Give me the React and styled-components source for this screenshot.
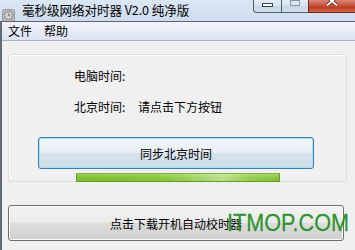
import React from "react";
import styled, { createGlobalStyle } from "styled-components";

const Global = createGlobalStyle`
  html, body { margin: 0; padding: 0; background: #f0f0f0; }
  * { box-sizing: border-box; }
`;

const cjk = `"Noto Sans CJK SC", "Noto Sans", sans-serif`;

const Window = styled.div`
  position: relative;
  width: 355px;
  height: 250px;
  overflow: hidden;
  display: flex;
  flex-direction: column;
  font-family: ${cjk};
  color: #000;
`;

const TitleBar = styled.div`
  height: 21px;
  flex: none;
  display: flex;
  align-items: flex-start;
  background: linear-gradient(#dce7f4, #cddcee);
`;

const AppIcon = styled.div`
  width: 13px;
  height: 13px;
  margin: 3px 0 0 2px;
  flex: none;
`;

const Title = styled.div`
  margin: 1px 0 0 7px;
  font-size: 12.6px;
  line-height: 18px;
  white-space: nowrap;
  letter-spacing: -0.1px;
`;

const Caption = styled.div`
  margin-left: auto;
  display: flex;
  height: 13px;
`;

const CapBtn = styled.div`
  width: ${(p) => p.$w}px;
  height: 13px;
  display: flex;
  justify-content: center;
  align-items: flex-start;
  border: 1px solid ${(p) => (p.$close ? "#6b2a20" : "#4d5d70")};
  border-top: none;
  border-right: ${(p) => (p.$close ? "none" : "0")};
  border-radius: ${(p) => (p.$first ? "0 0 0 4px" : "0")};
  background: ${(p) =>
    p.$close
      ? "linear-gradient(#d9897a 0%, #c9533d 45%, #c13b24 60%, #d2664d 100%)"
      : "linear-gradient(#e4ecf5 0%, #d6e2ee 50%, #c7d6e6 51%, #d2dfec 100%)"};
`;

const MinGlyph = styled.div`
  width: 11px;
  height: 4px;
  margin-top: 3px;
  background: #fff;
  border: 1px solid #3a4454;
`;

const MaxGlyph = styled.div`
  width: 10px;
  height: 7px;
  margin-top: -1px;
  border: 1px solid #8b97a6;
  border-top-width: 2px;
  background: transparent;
`;

const Frame = styled.div`
  flex: 1;
  display: flex;
  flex-direction: column;
  border-left: 2px solid #646b74;
  border-top: 1px solid #5e656e;
  background: #f0f0f0;
`;

const MenuBar = styled.div`
  height: 19px;
  flex: none;
  display: flex;
  align-items: center;
  padding-left: 6px;
  gap: 12px;
  background: linear-gradient(#f1f4fb, #dbe2f2);
  border-bottom: 1px solid #a6aec6;
`;

const MenuItem = styled.span`
  font-size: 12px;
  line-height: 16px;
  padding-bottom: 1px;
`;

const Client = styled.div`
  flex: 1;
  display: flex;
  flex-direction: column;
  padding: 13px 0 0 6px;
`;

const GroupBox = styled.div`
  width: 339px;
  height: 128px;
  flex: none;
  display: flex;
  flex-direction: column;
  align-items: flex-start;
  border: 1px solid #d5dfe5;
  border-radius: 3px;
  box-shadow: inset 1px 1px 0 #fff;
  padding-top: 13px;
`;

const Row = styled.div`
  display: flex;
  margin-left: 65px;
  margin-bottom: ${(p) => p.$mb || 0}px;
  font-size: 12px;
  line-height: 16px;
  white-space: nowrap;
`;

const Label = styled.span`
  width: 64px;
`;

const SyncButton = styled.div`
  width: 276px;
  height: 33px;
  margin-left: 29px;
  display: flex;
  align-items: center;
  justify-content: center;
  font-size: 12px;
  border: 1px solid #3c7fb1;
  border-radius: 3px;
  box-shadow: inset 0 0 0 1px #a6e2f8;
  background: linear-gradient(
    #f1f5f8 0%,
    #e9f0f5 48%,
    #d6e3ec 50%,
    #cfdee8 100%
  );
`;

const Progress = styled.div`
  width: 204px;
  height: 9px;
  margin: 4px 0 -1px 67px;
  border: 1px solid #5f9e22;
  border-top-color: #7db43a;
  border-radius: 1px;
  background: linear-gradient(
      rgba(255, 255, 255, 0.25),
      rgba(255, 255, 255, 0) 60%
    ),
    linear-gradient(
      90deg,
      #7fbd2e 0%,
      #86c336 40%,
      #a3d465 60%,
      #b9e08c 72%,
      #98cd53 85%,
      #84c234 100%
    );
`;

const DownloadButton = styled.div`
  width: 336px;
  height: 36px;
  margin: 23px 0 0 0;
  display: flex;
  align-items: center;
  justify-content: center;
  font-size: 12px;
  border: 1px solid #707070;
  border-radius: 3px;
  box-shadow: inset 0 0 0 1px #fbfbfb;
  background: linear-gradient(
    #f2f2f2 0%,
    #ebebeb 48%,
    #dddddd 50%,
    #cfcfcf 100%
  );
`;

const Watermark = styled.div`
  position: absolute;
  left: 227px;
  top: 209px;
  font-family: "Liberation Sans", Arial, sans-serif;
  font-size: 24px;
  line-height: 28px;
  color: rgba(28, 140, 28, 0.92);
  transform: scaleX(0.9);
  transform-origin: left center;
  -webkit-text-stroke: 0.3px rgba(28, 140, 28, 0.92);
  white-space: nowrap;
  pointer-events: none;
`;

function ClockIcon() {
  return (
    <svg width="13" height="13" viewBox="0 0 13 13">
      <rect x="0.5" y="0.5" width="12" height="12" rx="2" fill="#b8b8b8" stroke="#9a9a9a" />
      <circle cx="6.5" cy="6.5" r="4" fill="#d4d4d4" stroke="#8a8a8a" />
      <path d="M6.5 4.2V6.7H8.3" fill="none" stroke="#7a7a7a" strokeWidth="1" />
    </svg>
  );
}

function CloseGlyph() {
  return (
    <svg width="12" height="7" viewBox="0 0 12 7" style={{ marginTop: -1 }}>
      <path d="M1 -2L6 2.2L11 -2M1 6.5L6 2.2L11 6.5" fill="none" stroke="#5a1a10" strokeWidth="3.2" />
      <path d="M1 -2L6 2.2L11 -2M1 6.5L6 2.2L11 6.5" fill="none" stroke="#fff" strokeWidth="1.8" />
    </svg>
  );
}

export default function App() {
  return (
    <>
      <Global />
      <Window>
        <TitleBar>
          <AppIcon>
            <ClockIcon />
          </AppIcon>
          <Title>毫秒级网络对时器 V2.0 纯净版</Title>
          <Caption>
            <CapBtn $w={28} $first>
              <MinGlyph />
            </CapBtn>
            <CapBtn $w={27}>
              <MaxGlyph />
            </CapBtn>
            <CapBtn $w={47} $close>
              <CloseGlyph />
            </CapBtn>
          </Caption>
        </TitleBar>
        <Frame>
          <MenuBar>
            <MenuItem>文件</MenuItem>
            <MenuItem>帮助</MenuItem>
          </MenuBar>
          <Client>
            <GroupBox>
              <Row $mb={15}>
                <Label>电脑时间:</Label>
              </Row>
              <Row $mb={22}>
                <Label>北京时间:</Label>
                <span>请点击下方按钮</span>
              </Row>
              <SyncButton>同步北京时间</SyncButton>
              <Progress />
            </GroupBox>
            <DownloadButton>点击下载开机自动校时器</DownloadButton>
          </Client>
        </Frame>
        <Watermark>ITMOP.COM</Watermark>
      </Window>
    </>
  );
}
